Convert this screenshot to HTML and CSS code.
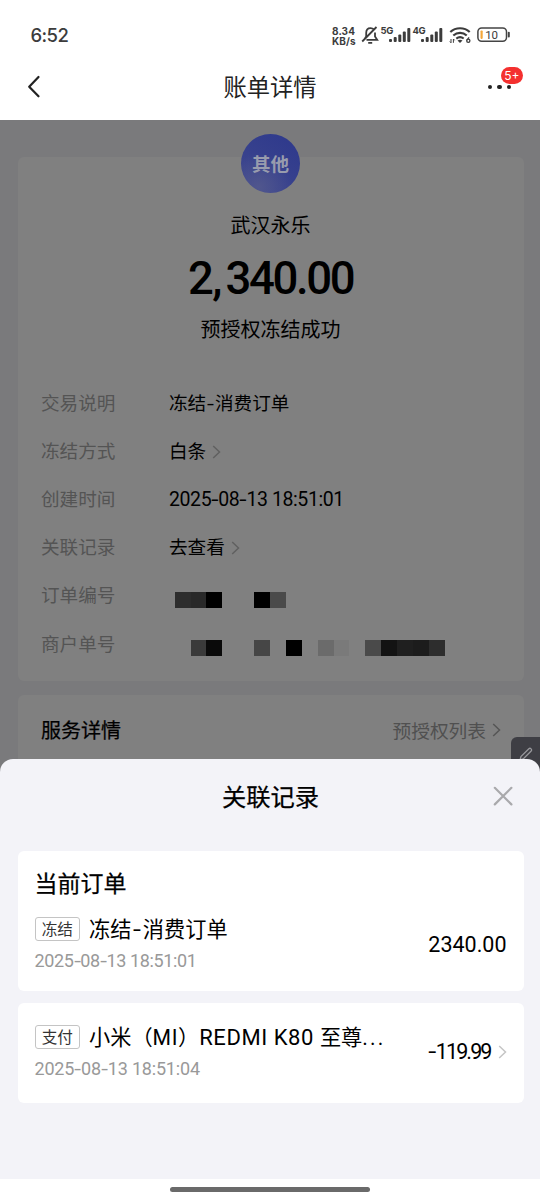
FILE: index.html
```html
<!DOCTYPE html>
<html lang="zh-CN">
<head>
<meta charset="utf-8">
<title>账单详情</title>
<link rel="stylesheet" href="styles.css">
</head>
<body>
<div class="phone">
  <header class="statusbar">
    <span class="clock">6:52</span>
    <div class="status-icons">
      <div class="netspeed"><span>8.34</span><span>KB/s</span></div>
      <svg class="bell" width="18" height="20" viewBox="0 0 18 20" fill="none" stroke="#3c3c3c" stroke-width="1.8"><path d="M3.4 14.2 5.2 11.5V8c0-3 1.7-4.8 4.3-4.8 1.4 0 2.5.5 3.3 1.4M14 7.5v4l2.2 3.3H5.5M1.2 16.5 15.5 2M7.2 17.8h4"/></svg>
      <span class="gen">5G</span>
      <svg class="signal" width="22" height="14" viewBox="0 0 22 14" fill="#3c3c3c"><rect x="0" y="11" width="3" height="3" rx="1"/><rect x="4.7" y="9" width="3" height="5" rx="1"/><rect x="9.3" y="6.5" width="3" height="7.5" rx="1"/><rect x="13.8" y="3.5" width="3" height="10.5" rx="1"/><rect x="18.3" y="0" width="3" height="14" rx="1"/></svg>
      <span class="gen">4G</span>
      <svg class="signal" width="22" height="14" viewBox="0 0 22 14" fill="#3c3c3c"><rect x="0" y="11" width="3" height="3" rx="1"/><rect x="4.7" y="9" width="3" height="5" rx="1"/><rect x="9.3" y="6.5" width="3" height="7.5" rx="1"/><rect x="13.8" y="3.5" width="3" height="10.5" rx="1"/><rect x="18.3" y="0" width="3" height="14" rx="1"/></svg>
      <svg class="wifi" width="23" height="17" viewBox="0 0 23 17" fill="none" stroke="#3c3c3c"><path stroke-width="2.2" d="M1.3 5c5.5-5 14-5 19.4 0M4.3 8.5c4-3.5 9.6-3.5 13.4 0"/><path stroke-width="2" d="M7.3 11.6c2.3-1.8 5.2-1.8 7.4 0"/><path fill="#3c3c3c" stroke="none" d="M8.5 13.5c1.6-1.1 3.4-1.1 5 0L11 16z"/><path stroke-width="1" d="M2 12v3.8M.8 14.5 2 15.8M4.4 15.8V12M5.6 13.3 4.4 12"/><circle cx="19.3" cy="13.8" r="1.6" stroke-width="1.3"/><path stroke-width="1.2" d="m20 10.3-2 2.8"/></svg>
      <svg class="battery" width="34" height="16" viewBox="0 0 34 16"><rect x=".9" y=".9" width="28.6" height="13.4" rx="3.8" fill="none" stroke="#444" stroke-width="1.5"/><rect x="3.5" y="3.4" width="2.2" height="8.5" rx=".8" fill="#f5a83a"/><path d="M31.8 5.8v3.6" stroke="#444" stroke-width="2" stroke-linecap="round"/><text class="battery-text" x="14.6" y="11.8">10</text></svg>
    </div>
  </header>
  <nav class="navbar">
    <svg class="back" width="14" height="24" viewBox="0 0 14 24" fill="none" stroke="#222" stroke-width="2.2" stroke-linecap="round" stroke-linejoin="round"><path d="M11.5 2 2.2 11.7l9.3 9.6"/></svg>
    <h1 class="nav-title">账单详情</h1>
    <div class="more">
      <i class="dot"></i><i class="dot"></i><i class="dot"></i>
      <span class="badge">5+</span>
    </div>
  </nav>
  <main class="page">
    <section class="card bill">
      <div class="avatar">其他</div>
      <div class="merchant">武汉永乐</div>
      <div class="amount">2<span class="comma">,</span>340.00</div>
      <div class="state">预授权冻结成功</div>
      <dl class="rows">
        <div class="row"><dt>交易说明</dt><dd>冻结<b class="dash">-</b>消费订单</dd></div>
        <div class="row"><dt>冻结方式</dt><dd>白条<svg class="chev" width="9" height="14" viewBox="0 0 9 14"><path d="m1.2 1 6.3 6-6.3 6"/></svg></dd></div>
        <div class="row"><dt>创建时间</dt><dd class="time"><span>2025<b>-</b>08<b>-</b>13 18:51:01</span></dd></div>
        <div class="row"><dt>关联记录</dt><dd>去查看<svg class="chev" width="9" height="14" viewBox="0 0 9 14"><path d="m1.2 1 6.3 6-6.3 6"/></svg></dd></div>
        <div class="row"><dt>订单编号</dt><dd><svg class="mosaic" width="276" height="16" viewBox="169 0 276 16" shape-rendering="crispEdges"><path fill="#2d2d2d" d="M175 0h16v16h-16z"/><path fill="#292929" d="M191 0h15v16h-15z"/><path d="M206 0h16v16h-16zM254 0h16v16h-16z"/><path fill="#4a4a4a" d="M270 0h16v16h-16z"/></svg></dd></div>
        <div class="row"><dt>商户单号</dt><dd><svg class="mosaic" width="276" height="16" viewBox="169 0 276 16" shape-rendering="crispEdges"><path fill="#3a3a3a" d="M191 0h15v16h-15z"/><path fill="#0a0a0a" d="M206 0h16v16h-16z"/><path fill="#464646" d="M254 0h16v16h-16z"/><path d="M286 0h16v16h-16z"/><path fill="#6b6b6b" d="M318 0h16v16h-16z"/><path fill="#7a7a7a" d="M334 0h15v16h-15z"/><path fill="#4a4a4a" d="M365 0h16v16h-16z"/><path fill="#131313" d="M381 0h16v16h-16z"/><path fill="#1f1f1f" d="M397 0h16v16h-16z"/><path fill="#1c1c1c" d="M413 0h16v16h-16z"/><path fill="#2d2d2d" d="M429 0h16v16h-16z"/></svg></dd></div>
      </dl>
    </section>
    <section class="card service">
      <h2>服务详情</h2>
      <a class="preauth">预授权列表<svg class="chev" width="9" height="14" viewBox="0 0 9 14"><path d="m1.2 1 6.3 6-6.3 6"/></svg></a>
    </section>
    <div class="float-btn"><svg width="14" height="14" viewBox="0 0 13 13" fill="none" stroke="#98989c" stroke-width="1.2"><path d="M1 12l.8-3.1L9.2 1.6c1.3-1.2 3.4.8 2.1 2.1L3.9 11z"/></svg></div>
  </main>
  <section class="sheet">
    <header class="sheet-head">
      <h2>关联记录</h2>
      <svg class="close" width="20" height="20" viewBox="0 0 20 20" stroke="#a9a9ac" stroke-width="2.2" stroke-linecap="round"><path d="m1.8 1.8 16.6 16.6M18.4 1.8 1.8 18.4"/></svg>
    </header>
    <article class="record current">
      <h3>当前订单</h3>
      <div class="record-body">
        <div class="info">
          <div class="line"><span class="tag">冻结</span><span class="name">冻结<b class="dash big">-</b>消费订单</span></div>
          <div class="date">2025<b>-</b>08<b>-</b>13 18:51:01</div>
        </div>
        <div class="price">2340.00</div>
      </div>
    </article>
    <article class="record">
      <div class="record-body">
        <div class="info">
          <div class="line"><span class="tag">支付</span><span class="name">小米（<span class="mi">MI</span>）<span class="lat">REDMI K80 </span>至尊<span class="dots">...</span></span></div>
          <div class="date wide">2025<b>-</b>08<b>-</b>13 18:51:04</div>
        </div>
        <div class="price minus"><b>-</b>119.99</div>
        <svg class="chev" width="9" height="14" viewBox="0 0 9 14"><path d="m1.2 1 6.3 6-6.3 6"/></svg>
      </div>
    </article>
  </section>
  <footer class="home"><div class="home-bar"></div></footer>
</div>
</body>
</html>
```
FILE: styles.css
```css
* { box-sizing: border-box; }
body, h1, h2, h3, dl, dd { margin: 0; font-weight: 400; }
body { font-family: Roboto, "Noto Sans CJK SC", sans-serif; background: #fff; color: #000; }
svg { display: block; flex: none; }
.phone { width: 540px; height: 1200px; display: flex; flex-direction: column; overflow: hidden; }

.statusbar { height: 56px; flex: none; display: flex; align-items: flex-start; justify-content: space-between; padding: 23px 29px 0 30.5px; color: #3c3c3c; }
.clock { font: 450 18.5px/25px Inter, sans-serif; letter-spacing: -.6px; }
.status-icons { display: flex; }
.netspeed { width: 28px; margin-top: 2.5px; display: flex; flex-direction: column; font: 700 10px/10px Inter, sans-serif; letter-spacing: .1px; }
.bell { margin: 2px 0 0 1px; }
.gen { width: 14px; margin: 3px 0 0 1.5px; font: 700 9.5px/10px Inter, sans-serif; letter-spacing: -.3px; }
.signal { margin: 5px 0 0 -5.5px; }
.wifi { margin: 4px 0 0 5.5px; }
.battery { margin: 4px 0 0 5.5px; }
.battery-text { font: 400 11.5px Roboto, sans-serif; text-anchor: middle; fill: #3c3c3c; }

.navbar { height: 63.5px; flex: none; display: grid; grid-template-columns: 100px 1fr 100px; align-items: center; }
.back { margin: -1px 0 0 27px; }
.nav-title { text-align: center; font-size: 23.3px; line-height: 30px; color: #222; padding-top: 1px; }
.more { position: relative; display: flex; gap: 5px; padding-left: 48px; margin-top: -1px; }
.dot { width: 4.4px; height: 4.4px; border-radius: 50%; background: #222; }
.badge { position: absolute; left: 60.5px; top: -18.5px; width: 22.5px; height: 17px; border-radius: 9px; background: #f4302f; color: #fff; text-align: center; font: 400 12px/17px Inter, sans-serif; }

.page { position: relative; height: 660px; flex: none; padding: 37.5px 16.5px 0 17.5px; background: #7a7a7c; }
.card { background: #808080; border-radius: 6px; }
.bill { height: 523.5px; display: flex; flex-direction: column; align-items: center; }
.avatar { width: 59px; height: 59px; margin-top: -23px; border-radius: 50%; background: radial-gradient(circle at 30% 90%, #50568d 0, transparent 50%), linear-gradient(35deg, #3f488e, #2d388c); color: #989cad; text-align: center; font: 700 18.5px/59px "Noto Sans CJK SC", sans-serif; }
.merchant { margin-top: 18.5px; font-size: 20px; line-height: 28px; }
.amount { height: 50px; margin-top: 14.5px; font-weight: 500; font-size: 45.5px; line-height: 50px; letter-spacing: -2.4px; }
.comma { letter-spacing: 3px; margin-left: 1px; }
.state { margin-top: 11.5px; font-size: 20px; line-height: 28px; }
.rows { align-self: stretch; margin-top: 36px; padding-left: 23.5px; }
.row { height: 48.2px; display: grid; grid-template-columns: 128px 1fr; align-items: center; font-size: 18.6px; line-height: 28px; }
dt { color: #545454; }
dd { display: flex; align-items: center; }
.time { font-size: 19.5px; letter-spacing: -.4px; }
b { font-weight: inherit; display: inline-block; transform: scaleX(1.35); margin: 0 1px; }
b.dash { margin: 0 1.8px; }
b.big { margin: 0 2.8px; }
.chev { margin: 0 0 0 6px; fill: none; stroke: #606060; stroke-width: 1.5; }
.mosaic { margin-top: 6.5px; }
.service { height: 80px; margin-top: 14.5px; padding: 21.5px 22.5px 0 23.5px; display: flex; justify-content: space-between; }
.service h2 { font-size: 20px; line-height: 28px; -webkit-text-stroke: .25px #000; }
.preauth { display: flex; height: 26px; align-items: center; font-size: 18.7px; color: #505050; }
.preauth .chev { stroke: #555; }
.float-btn { position: absolute; right: 0; top: 617.5px; width: 29.5px; height: 42px; border-radius: 6px 0 0 6px; background: #3e3e44; padding: 10px 0 0 8px; }

.sheet { position: relative; height: 420px; margin-top: -21px; flex: none; padding: 0 16.5px 0 17.5px; background: #f3f3f8; border-radius: 13px 13px 0 0; }
.sheet-head { height: 92.5px; display: grid; grid-template-columns: 30px 1fr 30px; padding-top: 23px; }
.sheet-head h2 { grid-column: 2; text-align: center; font-size: 24.3px; line-height: 32px; -webkit-text-stroke: .25px #000; }
.close { justify-self: end; margin: 4.5px 10.5px 0 0; }
.record { height: 99.5px; margin-bottom: 12px; padding: 17px 17px 0; background: #fff; border-radius: 6px; }
.current { height: 140px; padding-top: 18px; }
.record h3 { font-size: 23px; line-height: 32px; -webkit-text-stroke: .25px #000; margin-bottom: 11px; }
.record-body { display: flex; }
.info { flex: 1; }
.line { height: 34px; display: flex; align-items: center; }
.tag { width: 45.5px; height: 23.5px; border: 1px solid #c4c4c4; border-radius: 3px; text-align: center; font-size: 15.6px; line-height: 24px; color: #333; }
.name { margin-left: 9px; padding-top: 1px; font-size: 21.2px; line-height: 32px; white-space: nowrap; }
.mi { letter-spacing: .6px; }
.lat { font-size: 22px; letter-spacing: .55px; }
.dots { letter-spacing: 2.2px; }
.date { font-size: 18px; line-height: 24px; margin-top: 3px; color: #999; letter-spacing: -.35px; }
.wide { letter-spacing: -.18px; }
.price { margin-top: 18px; font-size: 21.5px; line-height: 30px; }
.minus { letter-spacing: -1.9px; margin-top: 17px; }
.minus b { margin-right: 3px; }
.record-body .chev { margin: 25px 0 0 7px; stroke: #c5c5c5; }
.home { flex: 1; background: #fff; }
.home-bar { width: 200px; height: 5px; margin: 8.5px auto; border-radius: 3px; background: #6a6a6a; }
```
